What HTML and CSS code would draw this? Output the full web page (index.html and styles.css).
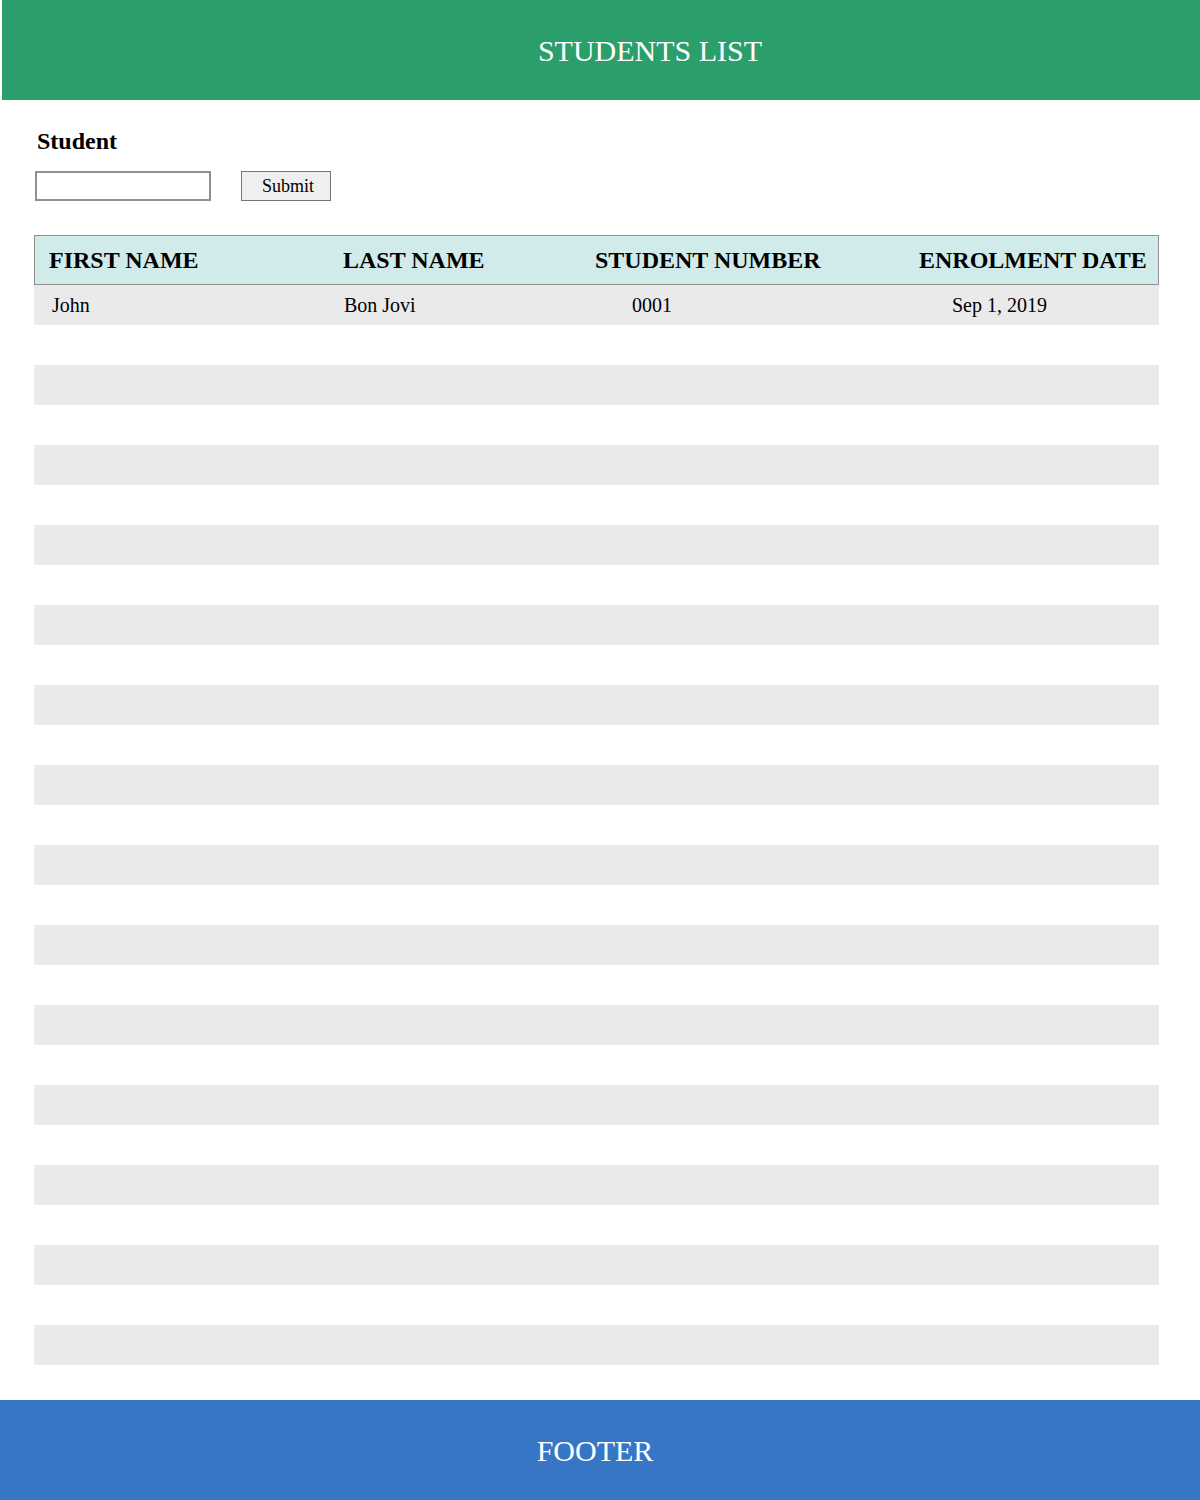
FILE: index.html
```html
<!DOCTYPE html>
<html>
<head>
<meta charset="utf-8">
<title>Students List</title>
<link rel="stylesheet" href="styles.css">
</head>
<body>
<header class="top">
  <h1 class="title">STUDENTS LIST</h1>
</header>
<main class="main">
  <form class="form">
    <label class="label" for="student">Student</label>
    <div class="controls">
      <input class="input" id="student" type="text">
      <button class="btn" type="button">Submit</button>
    </div>
  </form>
  <div class="table">
    <div class="thead">
      <div class="th c1">FIRST NAME</div>
      <div class="th c2">LAST NAME</div>
      <div class="th c3">STUDENT NUMBER</div>
      <div class="th c4">ENROLMENT DATE</div>
    </div>
    <div class="tbody">
      <div class="row">
        <div class="td d1">John</div>
        <div class="td d2">Bon Jovi</div>
        <div class="td d3">0001</div>
        <div class="td d4">Sep 1, 2019</div>
      </div>
      <div class="row"></div><div class="row"></div><div class="row"></div><div class="row"></div>
      <div class="row"></div><div class="row"></div><div class="row"></div><div class="row"></div>
      <div class="row"></div><div class="row"></div><div class="row"></div><div class="row"></div>
      <div class="row"></div><div class="row"></div><div class="row"></div><div class="row"></div>
      <div class="row"></div><div class="row"></div><div class="row"></div><div class="row"></div>
      <div class="row"></div><div class="row"></div><div class="row"></div><div class="row"></div>
      <div class="row"></div><div class="row"></div>
    </div>
  </div>
</main>
<footer class="foot">
  <p class="foot-text">FOOTER</p>
</footer>
</body>
</html>
```

FILE: styles.css
```css
html, body {
  margin: 0;
  padding: 0;
  background: #ffffff;
  font-family: "Liberation Serif", "Times New Roman", serif;
  color: #000;
}

.top {
  margin-left: 2px;
  height: 100px;
  background: #2a9e6b;
  display: flex;
  align-items: center;
  justify-content: center;
  padding-left: 98px;
  padding-top: 1px;
  box-sizing: border-box;
}

.title {
  margin: 0;
  font-weight: normal;
  font-size: 30px;
  color: #ffffff;
}

.main {
  padding: 28px 0 35px 34px;
}

.form {
  display: flex;
  flex-direction: column;
}

.label {
  font-weight: bold;
  font-size: 24px;
  padding-left: 3px;
  line-height: normal;
}

.controls {
  display: flex;
  gap: 30px;
  margin-top: 16px;
  padding-left: 1px;
}

.input {
  box-sizing: border-box;
  width: 176px;
  height: 30px;
  border: 2px solid #8f8f8f;
  margin: 0;
  padding: 0 4px;
  font-family: "Liberation Serif", serif;
  font-size: 18px;
}

.btn {
  box-sizing: border-box;
  width: 90px;
  height: 30px;
  border: 1px solid #767676;
  background: #efefef;
  margin: 0;
  padding: 0 0 0 4px;
  font-family: "Liberation Serif", serif;
  font-size: 18px;
  color: #000;
}

.table {
  width: 1125px;
  margin-top: 34px;
}

.thead {
  display: grid;
  grid-template-columns: 294px 252px 324px 255px;
  height: 50px;
  box-sizing: border-box;
  border: 1px solid #8f8f8f;
  background: #d1ebea;
  align-items: center;
}

.th {
  font-weight: bold;
  font-size: 24px;
  white-space: nowrap;
  padding-left: 14px;
}

.row {
  display: grid;
  grid-template-columns: 294px 252px 324px 255px;
  height: 40px;
  align-items: center;
}

.row:nth-child(odd) {
  background: #eaeaea;
}

.td {
  font-size: 20px;
  white-space: nowrap;
}

.d1 { padding-left: 18px; }
.d2 { padding-left: 16px; }
.d3 { padding-left: 52px; }
.d4 { padding-left: 48px; }

.foot {
  height: 100px;
  background: #3676c4;
  display: flex;
  align-items: center;
  justify-content: center;
  padding-right: 10px;
  padding-top: 2px;
  box-sizing: border-box;
}

.foot-text {
  margin: 0;
  font-size: 30px;
  color: #ffffff;
}
```
